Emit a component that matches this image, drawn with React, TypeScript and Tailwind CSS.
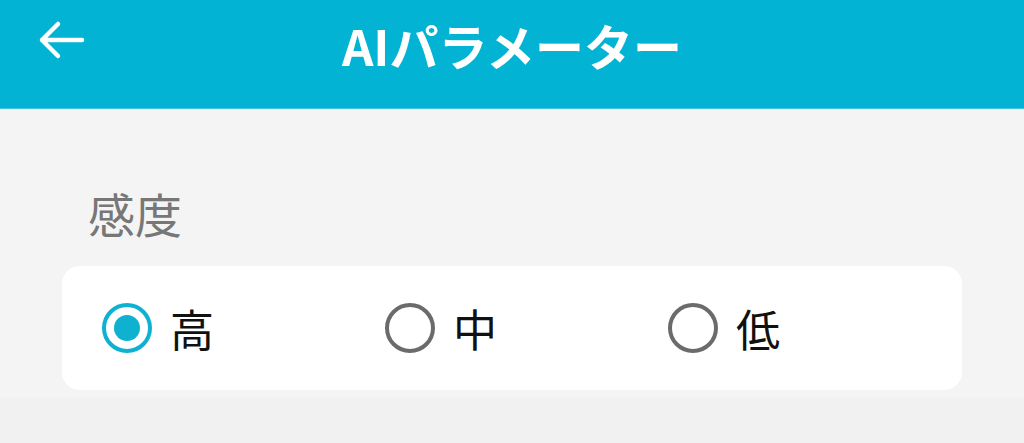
import { useState } from "react";

const LEVELS = ["高", "中", "低"];

function Radio({ checked }: { checked: boolean }) {
  return (
    <span
      className={`flex h-[50px] w-[50px] items-center justify-center rounded-full border-[4px] ${
        checked ? "border-[#0fb1d0]" : "border-[#6b6b6b]"
      }`}
    >
      {checked && <span className="h-[26px] w-[26px] rounded-full bg-[#0fb1d0]" />}
    </span>
  );
}

export default function App() {
  const [level, setLevel] = useState(0);

  return (
    <div
      className="min-h-[443px] w-full bg-[#f1f1f1]"
      style={{ fontFamily: '"Noto Sans CJK JP", "Noto Sans", sans-serif' }}
    >
      <header className="relative flex h-[109px] items-center justify-center border-b border-[#43c4dc] bg-[#02b3d4] pb-[20px]">
        <button type="button" aria-label="戻る" className="absolute left-[38px] top-[20px] text-white">
          <svg viewBox="0 0 48 40" fill="none" stroke="currentColor" strokeWidth="4.5" className="h-[40px] w-[48px]" strokeLinecap="round" strokeLinejoin="round">
            <path d="M4 20h40M20 4L4 20l16 16" />
          </svg>
        </button>
        <h1 className="text-[49px] font-bold leading-none text-white">AIパラメーター</h1>
      </header>

      {/* sensitivity */}
      <section className="bg-[#f4f4f4] px-[62px] pb-[8px] pt-[80px]">
        <h2 className="pl-[26px] text-[47px] leading-none text-[#777777]">感度</h2>
        <div className="mt-[30px] flex h-[124px] items-center rounded-[18px] bg-white pl-[40px]">
          {LEVELS.map((l, i) => (
            <button
              key={l}
              type="button"
              onClick={() => setLevel(i)}
              className="flex w-[283px] items-center gap-[18px]"
            >
              <Radio checked={level === i} />
              <span className="text-[44px] leading-none text-[#111111]">{l}</span>
            </button>
          ))}
        </div>
      </section>
    </div>
  );
}
